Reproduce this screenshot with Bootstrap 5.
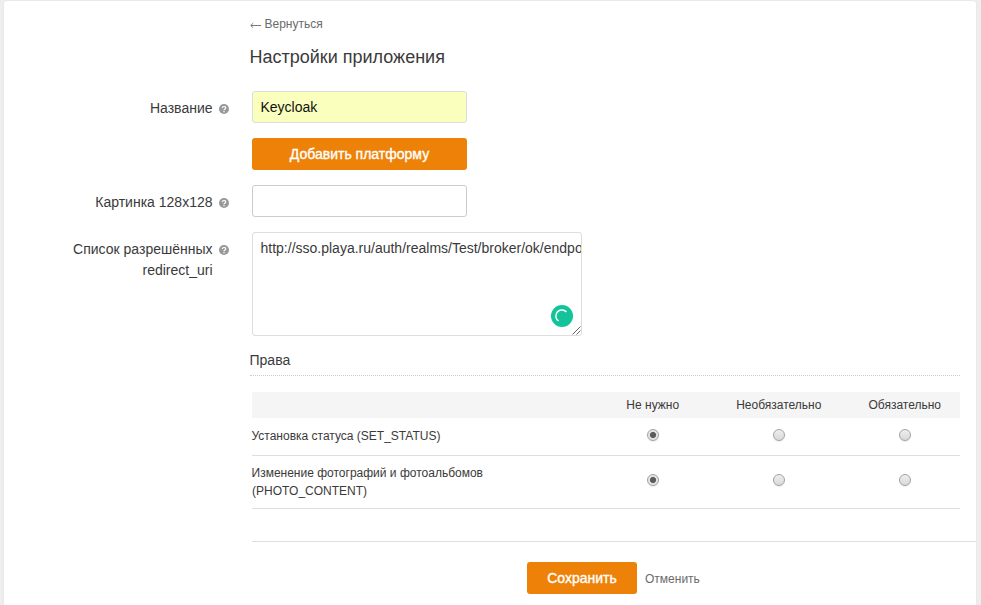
<!DOCTYPE html>
<html lang="ru">
<head>
<meta charset="utf-8">
<meta name="viewport" content="width=device-width, initial-scale=1">
<title>Настройки приложения</title>
<link href="https://cdn.jsdelivr.net/npm/bootstrap@5.3.0/dist/css/bootstrap.min.css" rel="stylesheet">
<style>
body{background:#eee;font-family:"Liberation Sans",Arial,sans-serif;font-size:14px;line-height:21px;color:#3a3a3a;height:605px;overflow:hidden;text-indent:-.5px}
.panel{margin:1px 5px 0 4px;height:620px;background:#fff;border-radius:3px;box-shadow:0 0 2px rgba(0,0,0,.08)}
.heading-area{padding:14px 0 0 246px}
.back-link{font-size:12px;line-height:18px;color:#6b6b6b;gap:4px;width:max-content}
.back-link svg{margin-top:2px}
.page-title{font-size:18px;line-height:24px;margin:12px 0 22px;font-weight:400;color:#3a3a3a}
.form-line{margin-bottom:15px}
.label-col{width:209px;padding:7px .5px 0 0;line-height:21px}
.hint-col{width:39px;padding:13px 0 0 6px}
.hint-col svg{display:block}
.field{width:215px;height:32px;padding:0 8px;font-size:14px;border:1px solid #ccc;border-radius:3px;color:#333;text-indent:-.5px}
.field-filled,.field-filled:focus{background:#faffbd;border-color:#ddd;color:#111}
.btn-ok{--bs-btn-color:#fff;--bs-btn-bg:#ee8208;--bs-btn-hover-color:#fff;--bs-btn-hover-bg:#e17a05;--bs-btn-border-radius:3px;border:0;height:32px;padding:0;font-size:14px;line-height:32px;-webkit-text-stroke:.35px #fff}
.btn-add{width:215px}
.btn-save{width:110px}
.uri-area{width:330px;height:104px;padding:5px 0 5px 8px;font-size:14px;line-height:21px;border:1px solid #ddd;border-radius:3px;color:#3a3a3a;white-space:pre;overflow:hidden;resize:none;display:block;text-indent:-.5px}
.spinner-badge{right:9px;bottom:9px}
.grip{right:1px;bottom:1px}
.section-name{margin:-1px 16px 16px 246px;height:26px;border-bottom:1px dotted #ccc}
.rights{margin:0 16px 0 248px;font-size:12px;line-height:18px}
.rights-row{display:grid;grid-template-columns:338px 126px 126px 118px;align-items:center;border-bottom:1px solid #ddd}
.rights-row>:nth-child(n+2){text-align:center}
.rights-row>:last-child{padding-left:8px}
.rights-head{background:#f5f5f5;height:26px;border:0}
.row-one{height:38px;padding-bottom:2px}
.row-two{height:53px}
.rights-name{width:250px}
.pick{appearance:none;display:block;width:12px;height:12px;margin:0 auto;border:1px solid #a3a3a3;border-radius:50%;background:linear-gradient(#eee,#d9d9d9);box-shadow:0 1px 1px rgba(0,0,0,.08)}
.pick:checked{background:radial-gradient(circle,#5c5c5c 0 2.7px,#e3e3e3 3.4px)}
.row-one .pick{margin-bottom:2px}
.row-two .pick{margin-bottom:4px}
.actions{margin:32px 0 0 248px;border-top:1px solid #ddd;padding:20px 0 0 275px}
.cancel{font-size:12px;color:#6b6b6b;margin-left:8px;padding-top:2px;text-indent:0}
</style>
</head>
<body>
<svg class="d-none" aria-hidden="true"><symbol id="hint" viewBox="0 0 10 10"><circle cx="5" cy="5" r="5" fill="#999"/><path d="M3.3 4C3.3 2 6.7 2 6.7 3.9C6.7 5 5 4.9 5 6.3M5 7.1V8.2" fill="none" stroke="#fff" stroke-width="1.2"/></symbol></svg>
<main class="panel">
  <header class="heading-area">
    <div class="back-link d-flex align-items-center"><svg width="11" height="6" viewBox="0 0 11 6"><path d="M.8 3.5H11M3.2 1.2L.8 3.5L3.2 5.8" fill="none" stroke="#777"/></svg><span>Вернуться</span></div>
    <h1 class="page-title">Настройки приложения</h1>
  </header>
  <form>
    <div class="form-line d-flex">
      <label class="label-col text-end" for="name">Название</label>
      <span class="hint-col"><svg width="10" height="10"><use href="#hint"/></svg></span>
      <input id="name" class="form-control field field-filled" value="Keycloak">
    </div>
    <div class="form-line d-flex">
      <span class="label-col"></span><span class="hint-col"></span>
      <button type="button" class="btn btn-ok btn-add">Добавить платформу</button>
    </div>
    <div class="form-line d-flex">
      <label class="label-col text-end" for="image">Картинка 128x128</label>
      <span class="hint-col"><svg width="10" height="10"><use href="#hint"/></svg></span>
      <input id="image" class="form-control field">
    </div>
    <div class="form-line d-flex">
      <label class="label-col text-end" for="uris">Список разрешённых redirect_uri</label>
      <span class="hint-col"><svg width="10" height="10"><use href="#hint"/></svg></span>
      <div class="position-relative">
        <textarea id="uris" class="uri-area" wrap="off">http://sso.playa.ru/auth/realms/Test/broker/ok/endpoint</textarea>
        <svg class="spinner-badge position-absolute" width="22" height="22" viewBox="0 0 22 22"><circle cx="11" cy="11" r="11" fill="#15c39a"/><path d="M7.5 15.9A6 6 0 0 1 11 5A6 6 0 0 1 15.4 6.9" fill="none" stroke="#fff" stroke-width="1.4"/></svg>
        <svg class="grip position-absolute" width="9" height="9" viewBox="0 0 9 9"><path d="M.5 8.5L8.5 .5M4.5 8.5L8.5 4.5" stroke="#555" stroke-width=".9"/></svg>
      </div>
    </div>
    <div class="section-name">Права</div>
    <div class="rights">
      <div class="rights-row rights-head"><span></span><span>Не нужно</span><span>Необязательно</span><span>Обязательно</span></div>
      <div class="rights-row row-one"><div class="rights-name">Установка статуса (SET_STATUS)</div>
        <div><input class="pick" type="radio" name="status" checked></div><div><input class="pick" type="radio" name="status"></div><div><input class="pick" type="radio" name="status"></div></div>
      <div class="rights-row row-two"><div class="rights-name">Изменение фотографий и фотоальбомов (PHOTO_CONTENT)</div>
        <div><input class="pick" type="radio" name="photo" checked></div><div><input class="pick" type="radio" name="photo"></div><div><input class="pick" type="radio" name="photo"></div></div>
    </div>
    <div class="actions d-flex align-items-center">
      <button type="button" class="btn btn-ok btn-save">Сохранить</button>
      <span class="cancel">Отменить</span>
    </div>
  </form>
</main>
<script src="https://cdn.jsdelivr.net/npm/bootstrap@5.3.0/dist/js/bootstrap.bundle.min.js"></script>
</body>
</html>
